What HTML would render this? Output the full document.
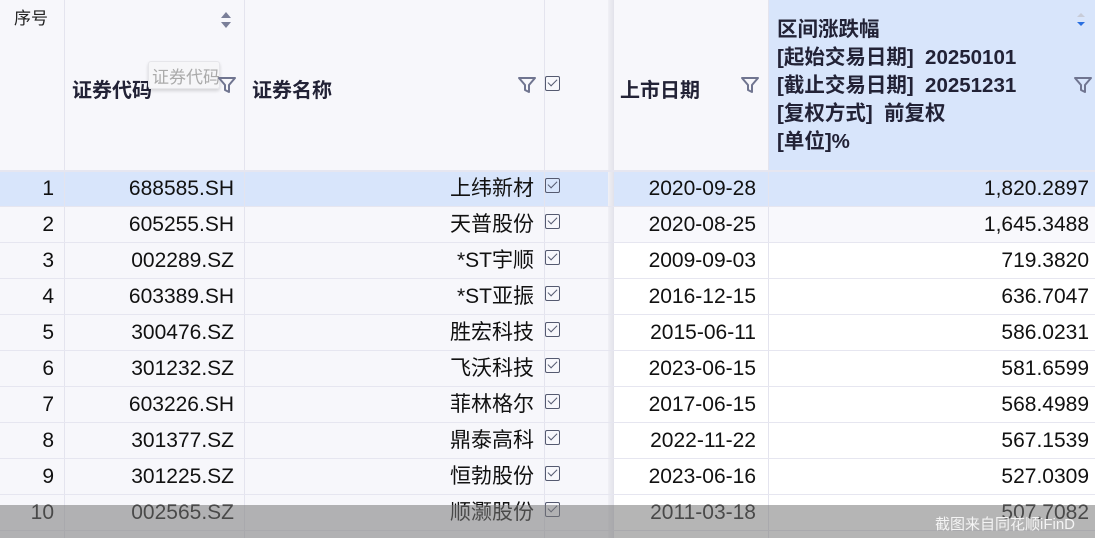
<!DOCTYPE html>
<html><head><meta charset="utf-8"><style>
*{margin:0;padding:0;box-sizing:border-box}
body{width:1095px;height:538px;overflow:hidden;background:#fff;font-family:"Liberation Sans","Noto Sans CJK SC",sans-serif;color:#111;position:relative}
.abs{position:absolute;white-space:nowrap}
.hdr{font-weight:bold;font-size:20px;color:#222236}
.cell{position:absolute;font-size:21px;text-align:right;line-height:36px;height:36px;white-space:nowrap}
.vl{position:absolute;top:0;width:1px;height:538px;background:#e4e4ee}
.hl{position:absolute;left:0;width:1095px;height:1px;background:#e6e6f0}
.cb{position:absolute;width:15px;height:15px;border:1.5px solid #555a70;border-radius:2px}
.cb:after{content:"";position:absolute;left:3.5px;top:0px;width:4px;height:8px;border:solid #555a70;border-width:0 1.5px 1.5px 0;transform:rotate(45deg)}
</style></head><body>
<div class="abs" style="left:0;top:0;width:612px;height:538px;background:#f7f7fb"></div>
<div class="abs" style="left:612px;top:0;width:156px;height:170px;background:#f7f7fb"></div>
<div class="abs" style="left:768px;top:0;width:327px;height:170px;background:#d8e5fb"></div>
<div class="abs" style="left:612px;top:207px;width:483px;height:35px;background:#f8f8fc"></div>
<div class="abs" style="left:0;top:171px;width:1095px;height:35px;background:#d8e5fb"></div>
<div class="abs" style="left:608px;top:0;width:6px;height:538px;background:linear-gradient(90deg,#f0f0f5,#e2e2ea)"></div>
<div class="vl" style="left:64px"></div><div class="vl" style="left:244px"></div><div class="vl" style="left:544px"></div><div class="vl" style="left:768px"></div>
<div class="hl" style="top:170px;height:2px"></div>
<div class="hl" style="top:206px"></div><div class="hl" style="top:242px"></div><div class="hl" style="top:278px"></div><div class="hl" style="top:314px"></div><div class="hl" style="top:350px"></div><div class="hl" style="top:386px"></div><div class="hl" style="top:422px"></div><div class="hl" style="top:458px"></div><div class="hl" style="top:494px"></div><div class="hl" style="top:530px"></div>

<div class="abs" style="left:14px;top:4px;font-size:17px;color:#222">序号</div>
<div class="abs" style="left:221px;top:12px;width:0;height:0;border-left:5px solid transparent;border-right:5px solid transparent;border-bottom:6px solid #7a7f99"></div>
<div class="abs" style="left:221px;top:22px;width:0;height:0;border-left:5px solid transparent;border-right:5px solid transparent;border-top:6px solid #7a7f99"></div>
<div class="abs hdr" style="left:72px;top:74px">证券代码</div>
<div class="abs" style="left:148px;top:61px;width:72px;height:28px;background:rgba(245,245,247,.9);border:1px solid #e6e6ea;border-radius:3px;box-shadow:0 2px 3px rgba(0,0,0,.15);color:#aaa;font-size:17px;padding:1px 3px;overflow:hidden">证券代码</div>
<div class="abs hdr" style="left:252px;top:74px">证券名称</div>
<div class="abs hdr" style="left:620px;top:74px">上市日期</div>
<div class="abs hdr" style="left:777px;top:16px;line-height:28px;font-size:20.5px">区间涨跌幅<br>[起始交易日期]&nbsp; 20250101<br>[截止交易日期]&nbsp; 20251231<br>[复权方式]&nbsp; 前复权<br>[单位]%</div>
<svg class="abs" style="left:1075px;top:12px" width="12" height="20"><path d="M2 5L6 1L10 5Z" fill="#c8ccd8"/><path d="M2 10L6 14L10 10Z" fill="#2a6fe0"/></svg>
<svg class="abs" width="20" height="20" style="left:217px;top:75px"><path d="M2 3H18L12 10V17L8 15V10Z" fill="none" stroke="#707590" stroke-width="2" stroke-linejoin="round"/></svg>
<svg class="abs" width="20" height="20" style="left:517px;top:75px"><path d="M2 3H18L12 10V17L8 15V10Z" fill="none" stroke="#707590" stroke-width="2" stroke-linejoin="round"/></svg>
<svg class="abs" width="20" height="20" style="left:740px;top:75px"><path d="M2 3H18L12 10V17L8 15V10Z" fill="none" stroke="#707590" stroke-width="2" stroke-linejoin="round"/></svg>
<svg class="abs" width="20" height="20" style="left:1073px;top:75px"><path d="M2 3H18L12 10V17L8 15V10Z" fill="none" stroke="#707590" stroke-width="2" stroke-linejoin="round"/></svg>
<div class="cb" style="left:545px;top:76px"></div>

<div id="rows"></div>
<script>
var d=[["1","688585.SH","上纬新材","2020-09-28","1,820.2897"],["2","605255.SH","天普股份","2020-08-25","1,645.3488"],["3","002289.SZ","*ST宇顺","2009-09-03","719.3820"],["4","603389.SH","*ST亚振","2016-12-15","636.7047"],["5","300476.SZ","胜宏科技","2015-06-11","586.0231"],["6","301232.SZ","飞沃科技","2023-06-15","581.6599"],["7","603226.SH","菲林格尔","2017-06-15","568.4989"],["8","301377.SZ","鼎泰高科","2022-11-22","567.1539"],["9","301225.SZ","恒勃股份","2023-06-16","527.0309"],["10","002565.SZ","顺灏股份","2011-03-18","507.7082"]];
var h="";d.forEach(function(r,i){var t=171+36*i;
h+='<div class="cell" style="left:0;width:54px;top:'+t+'px">'+r[0]+'</div>';
h+='<div class="cell" style="left:64px;width:170px;top:'+t+'px">'+r[1]+'</div>';
h+='<div class="cell" style="left:244px;width:290px;top:'+t+'px">'+r[2]+'</div>';
h+='<div class="cb" style="left:545px;top:'+(t+7)+'px"></div>';
h+='<div class="cell" style="left:612px;width:144px;top:'+t+'px">'+r[3]+'</div>';
h+='<div class="cell" style="left:768px;width:321px;top:'+t+'px">'+r[4]+'</div>';});
document.getElementById("rows").innerHTML=h;
</script>
<div class="abs" style="left:0;top:505px;width:1095px;height:33px;background:rgba(120,120,120,.55)"></div>
<div class="abs" style="left:935px;top:513px;font-size:15px;color:#f4f4f4">截图来自同花顺iFinD</div>
</body></html>
